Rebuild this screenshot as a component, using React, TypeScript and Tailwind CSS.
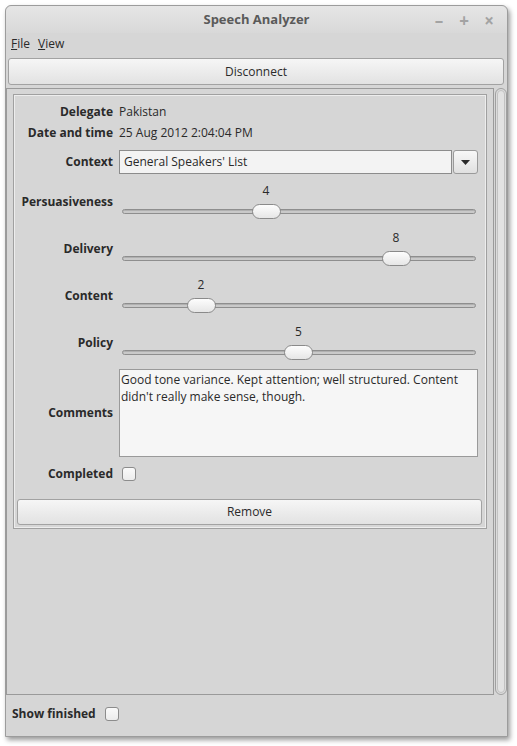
import React from 'react'

const font = { fontFamily: '"Open Sans", "Noto Sans", sans-serif' }

const Slider = ({ value }: { value: number }) => {
  // centre of the handle, in px from the widget's left edge (range 0..10)
  const center = 17 + 32.5 * value
  return (
    <div className="relative h-[47px] flex-1">
      <span
        className="absolute top-[4px] w-[20px] text-center text-[12px] leading-[18px] text-[#2a2a2a]"
        style={{ left: center - 10 }}
      >
        {value}
      </span>
      <div className="absolute top-[31px] right-[3px] left-[3px] h-[5px] rounded-full border border-[#8e8e8e] bg-[#c9c9c9] shadow-[inset_0_1px_0_#b0b0b0]" />
      <div
        className="absolute top-[26px] h-[15px] w-[29px] rounded-[8px] border border-[#8a8a8a] bg-gradient-to-b from-[#fdfdfd] to-[#e6e6e6]"
        style={{ left: center - 14.5 }}
      />
    </div>
  )
}

const Label = ({ children }: { children: React.ReactNode }) => (
  <div className="w-[98px] shrink-0 text-right text-[12px] font-bold text-[#2a2a2a]">{children}</div>
)

const Checkbox = () => (
  <div className="h-[14px] w-[14px] rounded-[3px] border border-[#8c8c8c] bg-gradient-to-b from-[#fafafa] to-[#ececec]" />
)

export default function App() {
  const sliders = [
    { name: 'Persuasiveness', value: 4 },
    { name: 'Delivery', value: 8 },
    { name: 'Content', value: 2 },
    { name: 'Policy', value: 5 },
  ]

  return (
    <div className="min-h-screen bg-white pt-[5px] pl-[5px]" style={font}>
      <div className="flex h-[732px] w-[503px] flex-col rounded-t-[6px] border border-[#9c9c9c] bg-[#d6d6d6] shadow-[2px_3px_5px_rgba(0,0,0,0.4)]">
        {/* title bar */}
        <div className="relative flex h-[27px] items-center justify-center rounded-t-[6px] bg-gradient-to-b from-[#e6e6e6] to-[#d8d8d8]">
          <span className="text-[13px] font-bold text-[#5a5a5a]">Speech Analyzer</span>
          <div className="absolute top-[2px] right-[11px] flex gap-[11px] text-[17px] font-bold text-[#a3a3a3]">
            <span className="w-[14px] text-center">–</span>
            <span className="w-[14px] text-center">+</span>
            <span className="w-[14px] text-center">×</span>
          </div>
        </div>

        {/* menu */}
        <div className="flex h-[22px] items-center gap-[8px] pl-[5px] text-[12px] text-[#2a2a2a]">
          <span>
            <span className="underline">F</span>ile
          </span>
          <span>
            <span className="underline">V</span>iew
          </span>
        </div>

        <button className="mx-[2px] mt-[3px] h-[27px] w-[496px] rounded-[3px] border border-[#a2a2a2] bg-gradient-to-b from-[#f6f6f6] to-[#e2e2e2] text-[12px] text-[#2a2a2a]">
          Disconnect
        </button>

        {/* scroll area */}
        <div className="mt-[3px] flex h-[607px]">
          <div className="flex-1 border border-[#9a9a9a] pt-[5px] pr-[6px] pl-[6px]">
            <div className="border border-[#a0a0a0]">
              <div className="border border-[#ededed] pt-[6px] pb-[2px]">
                <div className="flex h-[20px] items-center gap-[6px]">
                  <Label>Delegate</Label>
                  <span className="text-[12px] text-[#2a2a2a]">Pakistan</span>
                </div>
                <div className="flex h-[21px] items-center gap-[6px]">
                  <Label>Date and time</Label>
                  <span className="text-[12px] text-[#2a2a2a]">25 Aug 2012 2:04:04 PM</span>
                </div>
                <div className="mt-[7px] flex h-[24px] items-center gap-[6px]">
                  <Label>Context</Label>
                  <div className="flex h-[24px] w-[333px] items-center border border-[#8c8c8c] bg-[#f3f3f3] pl-[4px] text-[12px] text-[#2a2a2a]">
                    General Speakers' List
                  </div>
                  <div className="-ml-[5px] flex h-[24px] w-[25px] items-center justify-center rounded-[3px] border border-[#9a9a9a] bg-gradient-to-b from-[#f8f8f8] to-[#e0e0e0]">
                    <svg width="9" height="5" viewBox="0 0 9 5">
                      <path d="M0 0h9L4.5 5z" fill="#2a2a2a" />
                    </svg>
                  </div>
                </div>
                <div className="mt-[4px]">
                  {sliders.map((s) => (
                    <div key={s.name} className="flex h-[47px] items-center gap-[6px] pr-[6px]">
                      <Label>{s.name}</Label>
                      <Slider value={s.value} />
                    </div>
                  ))}
                </div>
                <div className="mt-[3px] flex items-center gap-[6px]">
                  <Label>Comments</Label>
                  <div className="h-[88px] w-[359px] border border-[#9a9a9a] bg-[#f6f6f6] pt-[1px] pl-[1px] text-[12px] leading-[17px] text-[#2a2a2a]">
                    Good tone variance. Kept attention; well structured. Content didn't really make sense, though.
                  </div>
                </div>
                <div className="mt-[8px] flex h-[18px] items-center gap-[9px]">
                  <Label>Completed</Label>
                  <Checkbox />
                </div>
                <button className="mx-[2px] mt-[16px] h-[26px] w-[465px] rounded-[3px] border border-[#a2a2a2] bg-gradient-to-b from-[#f6f6f6] to-[#e2e2e2] text-[12px] text-[#2a2a2a]">
                  Remove
                </button>
              </div>
            </div>
          </div>
          {/* scrollbar */}
          <div className="ml-[1px] w-[12px] rounded-[6px] border border-[#a0a0a0] bg-[#dcdcdc] p-[1px]">
            <div className="h-full rounded-[5px] border border-[#c2c2c2] bg-[#e2e2e2]" />
          </div>
        </div>

        {/* footer */}
        <div className="flex flex-1 items-center gap-[9px] pb-[4px] pl-[6px]">
          <span className="text-[12px] font-bold text-[#2a2a2a]">Show finished</span>
          <Checkbox />
        </div>
      </div>
    </div>
  )
}
